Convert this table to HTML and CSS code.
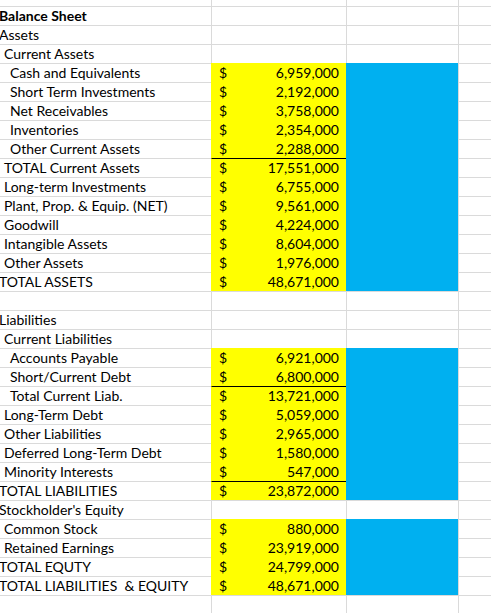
FILE: index.html
```html
<!DOCTYPE html>
<html lang="en">
<head>
    <meta charset="UTF-8">
    <meta name="viewport" content="width=device-width, initial-scale=1.0">
    <title>Balance Sheet</title>
    <link rel="stylesheet" href="styles.css">
</head>
<body>
    <div class="sheet">
        <div class="row top"><div class="cell label"></div><div class="cell"></div><div class="cell"></div><div class="cell"></div></div>
        <div class="row"><div class="cell label l0 bold">Balance Sheet</div><div class="cell"></div><div class="cell"></div><div class="cell"></div></div>
        <div class="row"><div class="cell label l0">Assets</div><div class="cell"></div><div class="cell"></div><div class="cell"></div></div>
        <div class="row"><div class="cell label l1">Current Assets</div><div class="cell"></div><div class="cell"></div><div class="cell"></div></div>
        <div class="row"><div class="cell label l2">Cash and Equivalents</div><div class="cell amt"><span>$</span><span>6,959,000</span></div><div class="cell hl"></div><div class="cell"></div></div>
        <div class="row"><div class="cell label l2">Short Term Investments</div><div class="cell amt"><span>$</span><span>2,192,000</span></div><div class="cell hl"></div><div class="cell"></div></div>
        <div class="row"><div class="cell label l2">Net Receivables</div><div class="cell amt"><span>$</span><span>3,758,000</span></div><div class="cell hl"></div><div class="cell"></div></div>
        <div class="row"><div class="cell label l2">Inventories</div><div class="cell amt"><span>$</span><span>2,354,000</span></div><div class="cell hl"></div><div class="cell"></div></div>
        <div class="row"><div class="cell label l2">Other Current Assets</div><div class="cell amt"><span>$</span><span>2,288,000</span></div><div class="cell hl"></div><div class="cell"></div></div>
        <div class="row"><div class="cell label l1">TOTAL Current Assets</div><div class="cell amt sum"><span>$</span><span>17,551,000</span></div><div class="cell hl"></div><div class="cell"></div></div>
        <div class="row"><div class="cell label l1">Long-term Investments</div><div class="cell amt"><span>$</span><span>6,755,000</span></div><div class="cell hl"></div><div class="cell"></div></div>
        <div class="row"><div class="cell label l1">Plant, Prop. &amp; Equip. (NET)</div><div class="cell amt"><span>$</span><span>9,561,000</span></div><div class="cell hl"></div><div class="cell"></div></div>
        <div class="row"><div class="cell label l1">Goodwill</div><div class="cell amt"><span>$</span><span>4,224,000</span></div><div class="cell hl"></div><div class="cell"></div></div>
        <div class="row"><div class="cell label l1">Intangible Assets</div><div class="cell amt"><span>$</span><span>8,604,000</span></div><div class="cell hl"></div><div class="cell"></div></div>
        <div class="row"><div class="cell label l1">Other Assets</div><div class="cell amt"><span>$</span><span>1,976,000</span></div><div class="cell hl"></div><div class="cell"></div></div>
        <div class="row"><div class="cell label l0">TOTAL ASSETS</div><div class="cell amt"><span>$</span><span>48,671,000</span></div><div class="cell hl"></div><div class="cell"></div></div>
        <div class="row"><div class="cell label"></div><div class="cell"></div><div class="cell"></div><div class="cell"></div></div>
        <div class="row"><div class="cell label l0">Liabilities</div><div class="cell"></div><div class="cell"></div><div class="cell"></div></div>
        <div class="row"><div class="cell label l1">Current Liabilities</div><div class="cell"></div><div class="cell"></div><div class="cell"></div></div>
        <div class="row"><div class="cell label l2">Accounts Payable</div><div class="cell amt"><span>$</span><span>6,921,000</span></div><div class="cell hl"></div><div class="cell"></div></div>
        <div class="row"><div class="cell label l2">Short/Current Debt</div><div class="cell amt"><span>$</span><span>6,800,000</span></div><div class="cell hl"></div><div class="cell"></div></div>
        <div class="row"><div class="cell label l2">Total Current Liab.</div><div class="cell amt sum"><span>$</span><span>13,721,000</span></div><div class="cell hl"></div><div class="cell"></div></div>
        <div class="row"><div class="cell label l1">Long-Term Debt</div><div class="cell amt"><span>$</span><span>5,059,000</span></div><div class="cell hl"></div><div class="cell"></div></div>
        <div class="row"><div class="cell label l1">Other Liabilities</div><div class="cell amt"><span>$</span><span>2,965,000</span></div><div class="cell hl"></div><div class="cell"></div></div>
        <div class="row"><div class="cell label l1">Deferred Long-Term Debt</div><div class="cell amt"><span>$</span><span>1,580,000</span></div><div class="cell hl"></div><div class="cell"></div></div>
        <div class="row"><div class="cell label l1">Minority Interests</div><div class="cell amt"><span>$</span><span>547,000</span></div><div class="cell hl"></div><div class="cell"></div></div>
        <div class="row"><div class="cell label l0">TOTAL LIABILITIES</div><div class="cell amt sum"><span>$</span><span>23,872,000</span></div><div class="cell hl"></div><div class="cell"></div></div>
        <div class="row"><div class="cell label l0">Stockholder's Equity</div><div class="cell"></div><div class="cell"></div><div class="cell"></div></div>
        <div class="row"><div class="cell label l1">Common Stock</div><div class="cell amt"><span>$</span><span>880,000</span></div><div class="cell hl"></div><div class="cell"></div></div>
        <div class="row"><div class="cell label l1">Retained Earnings</div><div class="cell amt"><span>$</span><span>23,919,000</span></div><div class="cell hl"></div><div class="cell"></div></div>
        <div class="row"><div class="cell label l0">TOTAL EQUTY</div><div class="cell amt"><span>$</span><span>24,799,000</span></div><div class="cell hl"></div><div class="cell"></div></div>
        <div class="row"><div class="cell label l0">TOTAL LIABILITIES &nbsp;&amp; EQUITY</div><div class="cell amt"><span>$</span><span>48,671,000</span></div><div class="cell hl"></div><div class="cell"></div></div>
        <div class="row"><div class="cell label"></div><div class="cell"></div><div class="cell"></div><div class="cell"></div></div>
    </div>
</body>
</html>
```

FILE: styles.css
```css
body {
    margin: 0;
    overflow: hidden;
    background-color: #fff;
    font-family: Lato, 'Liberation Sans', sans-serif;
    font-size: 14px;
    color: #000;
}
.sheet {
    width: 491px;
}
.row {
    display: grid;
    grid-template-columns: 211px 135px 112px 33px;
    height: 19px;
}
.cell {
    box-sizing: border-box;
    height: 19px;
    border-top: 1px solid #dadada;
    border-left: 1px solid #dadada;
    line-height: 18px;
    white-space: nowrap;
}
/* first row is cut off by the window, only its bottom part shows */
.row.top {
    height: 6px;
}
.row.top .cell {
    height: 6px;
    border-top: none;
}
.label {
    border-left: none;
}
.label.l0 {
    text-indent: -1px;
}
.label.l1 {
    padding-left: 4px;
}
.label.l2 {
    padding-left: 10px;
}
.bold {
    font-weight: bold;
}
.amt {
    display: flex;
    justify-content: space-between;
    padding: 0 7px 0 7px;
    background-color: #ffff00;
    border-color: #ffff00;
}
.amt.sum {
    border-top-color: #000;
}
.hl {
    background-color: #00b0f0;
    border-color: #00b0f0;
}
```
